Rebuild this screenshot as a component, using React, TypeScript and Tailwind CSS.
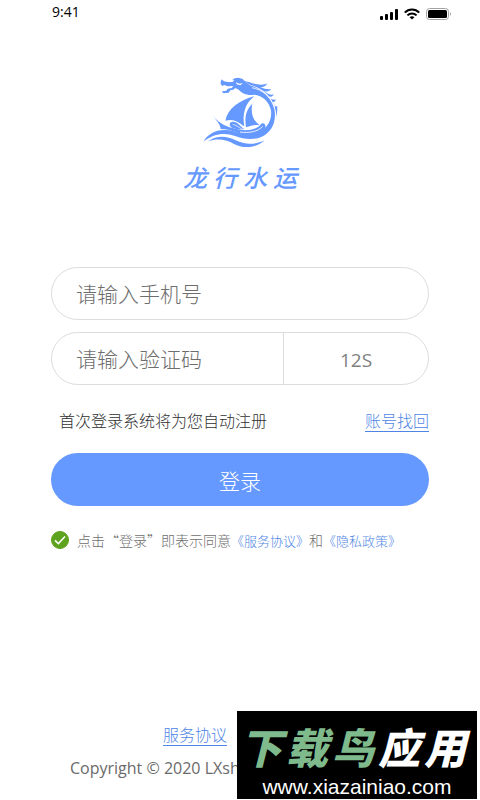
import { useState } from "react"

const sans = "font-['Open_Sans','Noto_Sans_CJK_SC',sans-serif]"

function SignalIcon() {
  return (
    <svg width="18" height="11" viewBox="0 0 18 11" fill="#000">
      <rect x="0" y="7" width="3" height="4" rx="1" />
      <rect x="5" y="5" width="3" height="6" rx="1" />
      <rect x="10" y="3" width="3" height="8" rx="1" />
      <rect x="15" y="0" width="3" height="11" rx="1" />
    </svg>
  )
}

function WifiIcon() {
  return (
    <svg width="16" height="12" viewBox="0 0 16 12" fill="none" stroke="#000" strokeWidth="2">
      <path d="M0.8 4.6C4.8 0.4 11.2 0.4 15.2 4.6" />
      <path d="M3.4 7.4C6 4.8 10 4.8 12.6 7.4" />
      <path d="M8 11.4L5.6 9.2C7 8 9 8 10.4 9.2Z" fill="#000" stroke="none" />
    </svg>
  )
}

function BatteryIcon() {
  return (
    <svg width="26" height="12" viewBox="0 0 26 12">
      <rect x="0.5" y="0.5" width="22" height="11" rx="3" fill="none" stroke="#a3a3a3" />
      <rect x="2" y="2" width="19" height="8" rx="1.5" fill="#000" />
      <path d="M24 4.2C25.4 4.8 25.4 7.2 24 7.8Z" fill="#a3a3a3" />
    </svg>
  )
}

function DragonLogo() {
  return (
    <svg className="h-[90px] w-[100px]" viewBox="0 0 300 270" fill="#6699ff" role="img" aria-label="龙行水运">
      {/* head, back and tail */}
      <path d="M92 53L95 46L102 52L114 54L128 54L133 48L126 49L134 43L146 41L158 45L168 55L180 64C216 74 244 100 253 135C261 176 243 206 214 219C190 229 160 225 135 216C104 204 70 209 41 232C52 211 78 196 108 198C139 200 160 216 194 208C229 199 247 170 243 139C237 112 218 94 192 92C172 95 155 88 146 77L136 72L130 77L121 79L116 86L100 88L96 82L109 80L113 74L125 72L130 66L112 67L103 63L97 66L92 60Z" />
      {/* eye and cheek */}
      <path d="M138 55L148 59L159 57L151 64L140 61Z" fill="#fff" />
      {/* mane */}
      <path d="M162 51C184 55 196 62 213 62C221 62 227 61 232 58C229 66 221 70 211 70C226 76 237 77 244 74C240 82 230 84 222 81C237 93 245 94 251 91C249 99 241 100 235 96C245 108 252 109 257 106C256 115 249 116 244 111C252 125 258 129 262 127C262 137 261 150 260 160C257 108 228 75 180 62Z" />
      <path d="M186 71C216 77 243 97 254 132" fill="none" stroke="#fff" strokeWidth="2.5" />
      {/* sails */}
      <path d="M193 97C149 108 113 134 106 170C132 163 145 174 163 187C157 153 163 120 193 97Z" />
      <path d="M187 119C169 137 163 157 168 190C183 184 195 182 209 183C190 172 181 148 187 119Z" />
      {/* hull and waves */}
      <path d="M70 157C90 180 109 189 139 195C160 200 180 200 197 193C205 190 211 183 216 178C224 177 227 182 226 190C220 205 203 212 181 213C148 214 130 195 92 195C91 182 81 172 70 157Z" />
      <path d="M126 191C114 182 119 172 131 173C145 175 151 188 163 195C150 197 138 195 126 191Z" />
      <path d="M128 181C137 182 146 190 158 196" fill="none" stroke="#fff" strokeWidth="2" />
      <path d="M150 204C177 208 205 203 218 187" fill="none" stroke="#fff" strokeWidth="2.5" />
      <path d="M54 232C83 212 111 217 137 229C165 242 191 244 224 229C195 255 156 253 132 240C109 227 85 222 54 232Z" />
    </svg>
  )
}

export default function App() {
  const [agreed, setAgreed] = useState(true)

  return (
    <main className={`relative flex min-h-screen flex-col bg-white ${sans} font-light`}>
      {/* STATUS BAR */}
      <header className="flex h-6 items-center justify-between pl-[52px] pr-7 text-sm font-normal text-black">
        <span>9:41</span>
        <div className="mt-1 flex items-center gap-1.5">
          <SignalIcon />
          <WifiIcon />
          <BatteryIcon />
        </div>
      </header>

      {/* BRAND */}
      <div className="mt-10 flex flex-col items-center">
        <DragonLogo />
        <h1 className="mt-2 flex gap-1.5 text-2xl font-medium italic text-[#6699ff]">
          <span>龙</span>
          <span>行</span>
          <span>水</span>
          <span>运</span>
        </h1>
      </div>

      {/* LOGIN FORM */}
      <form className="mt-[73px] flex flex-col px-[51px]" onSubmit={(e) => e.preventDefault()}>
        <input
          type="tel"
          aria-label="手机号"
          placeholder="请输入手机号"
          className="h-[53px] w-full rounded-full border border-[#dcdcdc] px-6 text-[21px] text-[#555] outline-none placeholder:text-[#6e6e6e]"
        />

        <div className="mt-3 flex h-[53px] rounded-full border border-[#dcdcdc]">
          <input
            type="text"
            aria-label="验证码"
            placeholder="请输入验证码"
            className="min-w-0 flex-1 rounded-l-full pl-6 pt-0.5 text-[21px] text-[#555] outline-none placeholder:text-[#6e6e6e]"
          />
          <button type="button" className="w-[145px] border-l border-[#dcdcdc] pt-1 text-[19px] font-normal text-[#808080]">
            12S
          </button>
        </div>

        <div className="mt-6 flex items-center justify-between pl-2 text-base">
          <p className="text-[#303030]">首次登录系统将为您自动注册</p>
          <a href="#recover" className="border-b border-[#4f86e6] leading-5 text-[#4f86e6]">
            账号找回
          </a>
        </div>

        <button type="submit" className="mt-5 h-[53px] w-full rounded-full bg-[#6699ff] pt-1 text-[21px] text-white">
          登录
        </button>

        <div className="mt-6 flex items-center gap-2 text-sm text-[#6e6e6e]">
          <span className="grid size-[18px] shrink-0 place-items-center">
            <input
              id="agree"
              type="checkbox"
              checked={agreed}
              onChange={(e) => setAgreed(e.target.checked)}
              className="col-start-1 row-start-1 size-[18px] appearance-none rounded-full border border-[#5da31d] checked:bg-[#5da31d]"
            />
            <svg className="pointer-events-none col-start-1 row-start-1" width="18" height="18" viewBox="0 0 18 18" fill="none" stroke="#fff" strokeWidth="1.5">
              <path d="M4 9.4L7.4 12.6L14 5.6" />
            </svg>
          </span>
          <p className="whitespace-nowrap font-['Noto_Sans_CJK_SC',sans-serif]">
            <label htmlFor="agree">点击“登录”即表示同意</label>
            <a href="#service" className="text-[13px] text-[#4f86e6]">《服务协议》</a>
            和
            <a href="#privacy" className="text-[13px] text-[#4f86e6]">《隐私政策》</a>
          </p>
        </div>
      </form>

      {/* FOOTER */}
      <footer className="mt-auto flex flex-col items-start pb-5 text-base">
        <a href="#service" className="ml-[163px] border-b border-[#4f86e6] leading-5 text-[#4f86e6]">
          服务协议
        </a>
        <p className="ml-[70px] mt-2.5 font-normal text-[#6a6a6a]">Copyright © 2020 LXsh</p>
      </footer>

      {/* DOWNLOAD BANNER */}
      <aside className="absolute bottom-px right-[3px] flex h-[88px] w-60 flex-col items-center justify-end overflow-hidden bg-black text-white">
        <p className="flex gap-1 whitespace-nowrap pr-2 font-['Noto_Sans_CJK_SC',sans-serif] text-[42px] font-black italic leading-[58px]">
          <span className="text-[#7fba8c]">下</span>
          <span className="text-[#7fba8c]">载</span>
          <span className="text-[#7fba8c]">鸟</span>
          <span>应</span>
          <span>用</span>
        </p>
        <p className="font-['Liberation_Sans',sans-serif] text-[21px] font-normal leading-6">www.xiazainiao.com</p>
      </aside>
    </main>
  )
}
